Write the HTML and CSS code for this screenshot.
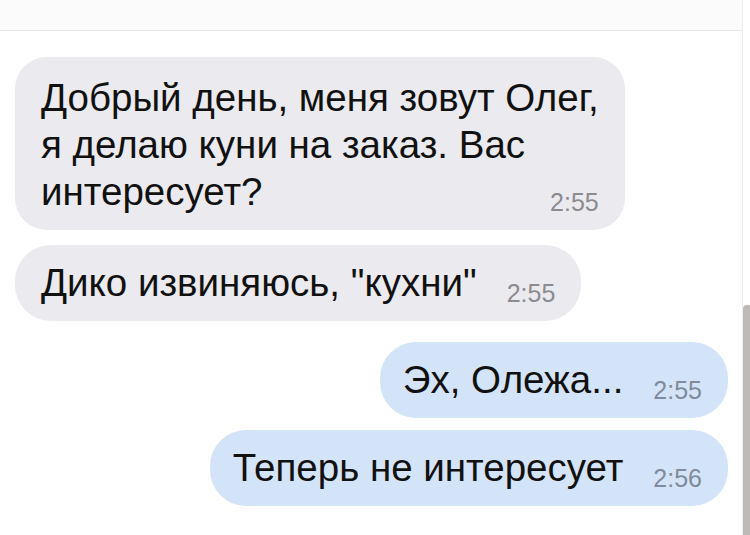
FILE: index.html
```html
<!DOCTYPE html>
<html lang="ru">
<head>
<meta charset="utf-8">
<title>Чат</title>
<link rel="stylesheet" href="styles.css">
</head>
<body>
<div class="screen">
  <div class="main">
    <div class="header"></div>
    <div class="chat">
      <div class="bubble in multi">
        <div class="text">Добрый день, меня зовут Олег,<br>я делаю куни на заказ. Вас<br>интересует?</div>
        <div class="time">2:55</div>
      </div>
      <div class="bubble in single gap-s">
        <div class="text">Дико извиняюсь, "кухни"</div>
        <div class="time">2:55</div>
      </div>
      <div class="bubble out single gap-l">
        <div class="text">Эх, Олежа...</div>
        <div class="time">2:55</div>
      </div>
      <div class="bubble out single gap-xs">
        <div class="text">Теперь не интересует</div>
        <div class="time">2:56</div>
      </div>
    </div>
  </div>
  <div class="rail">
    <div class="rail-space"></div>
    <div class="rail-bar"></div>
  </div>
</div>
</body>
</html>
```
FILE: styles.css
```css
html, body {
  margin: 0;
  padding: 0;
  background: #ffffff;
}

.screen {
  display: flex;
  width: 750px;
  height: 535px;
  overflow: hidden;
  font-family: "Liberation Sans", Arial, sans-serif;
  color: #111111;
}

.main {
  flex: 1;
  display: flex;
  flex-direction: column;
  min-width: 0;
}

.header {
  height: 30px;
  background: #fbfbfc;
  border-bottom: 1px solid #e6e6e9;
  flex: none;
}

.chat {
  display: flex;
  flex-direction: column;
  align-items: flex-start;
  padding: 26px 14px 0 15px;
}

.bubble {
  border-radius: 36px;
  padding: 14px 26px 15px 26px;
  white-space: nowrap;
}

.bubble.in {
  background: #eaeaef;
  align-self: flex-start;
}

.bubble.out {
  background: #d4e4f8;
  align-self: flex-end;
  padding-left: 23px;
}

.text {
  font-size: 38.5px;
  line-height: 47px;
}

.time {
  font-size: 25px;
  line-height: 25px;
  color: #8b8b90;
}

.bubble.out .time {
  color: #7f8b9b;
}

.multi {
  display: grid;
  padding-top: 17px;
  padding-bottom: 15px;
  border-radius: 32px;
}

.multi .text,
.multi .time {
  grid-area: 1 / 1;
}

.multi .time {
  align-self: end;
  justify-self: end;
  margin-right: 0;
}

.single {
  display: flex;
  align-items: flex-end;
  gap: 30px;
}

.gap-s { margin-top: 15px; }
.gap-l { margin-top: 21px; }
.gap-xs { margin-top: 12px; }

.rail {
  width: 7px;
  flex: none;
  border-left: 1px solid #ececee;
  display: flex;
  flex-direction: column;
}

.rail-space {
  height: 305px;
  flex: none;
}

.rail-bar {
  flex: 1;
  background: #bdbab8;
  border-top-left-radius: 4px;
}
```
